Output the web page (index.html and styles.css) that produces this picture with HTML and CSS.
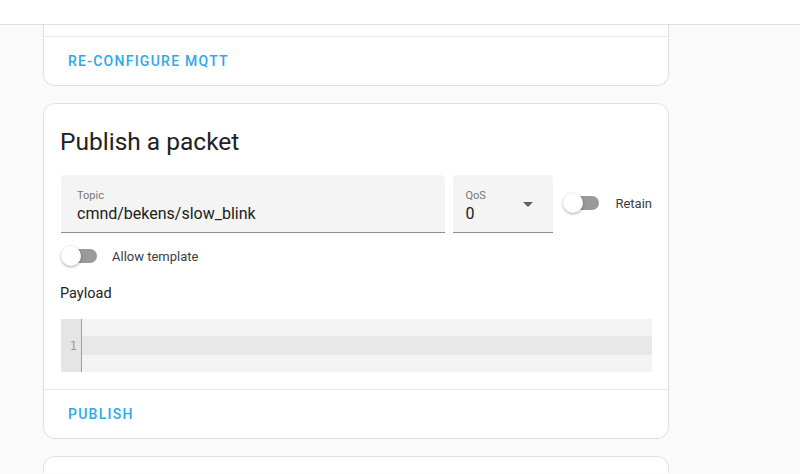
FILE: index.html
```html
<!DOCTYPE html>
<html>
<head>
<meta charset="utf-8">
<link rel="stylesheet" href="styles.css">
</head>
<body>
<div class="header"></div>
<div class="main">
  <div class="card card-clipped">
    <div class="clip-tail"></div>
    <div class="actions"><button class="btn">Re-configure MQTT</button></div>
  </div>

  <div class="card">
    <h1 class="card-header">Publish a packet</h1>
    <div class="card-content">
      <div class="row">
        <div class="field field-topic">
          <span class="field-label">Topic</span>
          <span class="field-value">cmnd/bekens/slow_blink</span>
        </div>
        <div class="field field-qos">
          <span class="field-label">QoS</span>
          <span class="field-value">0</span>
          <svg class="caret" width="10" height="5" viewBox="0 0 10 5"><path d="M0 0L5 5L10 0Z" fill="#5f5f5f"/></svg>
        </div>
        <label class="switch-row switch-retain">
          <span class="switch"><span class="track"></span><span class="thumb"></span></span>
          <span class="switch-text">Retain</span>
        </label>
      </div>
      <label class="switch-row switch-template">
        <span class="switch"><span class="track"></span><span class="thumb"></span></span>
        <span class="switch-text">Allow template</span>
      </label>
      <p class="payload-label">Payload</p>
      <div class="editor">
        <div class="gutter"><span class="lineno">1</span></div>
        <div class="code"><div class="code-line"></div></div>
      </div>
    </div>
    <div class="actions"><button class="btn">Publish</button></div>
  </div>

  <div class="card card-next"></div>
</div>
</body>
</html>
```

FILE: styles.css
```css
html, body {
  margin: 0;
  padding: 0;
  height: 100%;
  overflow: hidden;
  background: #fafafa;
  font-family: Roboto, "Noto Sans", sans-serif;
  color: #212121;
}

.header {
  height: 24px;
  background: #ffffff;
  border-bottom: 1px solid #e0e0e0;
}

.main {
  width: 626px;
  margin-left: 43px;
  display: flex;
  flex-direction: column;
  gap: 17px;
}

.card {
  background: #ffffff;
  border: 1px solid #e0e0e0;
  border-radius: 12px;
}

.card-clipped {
  border-top: none;
  border-top-left-radius: 0;
  border-top-right-radius: 0;
}

.clip-tail {
  height: 11px;
}

.actions {
  border-top: 1px solid #e8e8e8;
  height: 48px;
  padding: 0 8px;
  display: flex;
  align-items: center;
}

.btn {
  background: none;
  border: none;
  padding: 0 16px;
  height: 36px;
  font-family: Roboto, sans-serif;
  font-weight: 500;
  font-size: 14px;
  letter-spacing: 1.25px;
  text-transform: uppercase;
  color: #2fa8e6;
}

.card-header {
  margin: 0;
  padding: 22px 16px 17px;
  font-size: 24.5px;
  font-weight: 400;
  line-height: 32px;
  color: #212121;
}

.card-content {
  padding: 0 16px 17px 17px;
}

.row {
  display: flex;
  align-items: center;
  gap: 8px;
}

.field {
  position: relative;
  height: 58px;
  background: #f4f4f4;
  border-bottom: 1px solid #8e8e8e;
  border-radius: 4px 4px 0 0;
  box-sizing: border-box;
  padding: 14px 16px 0;
  display: flex;
  flex-direction: column;
}

.field-topic {
  flex: 1;
}

.field-qos {
  width: 100px;
  padding-left: 12px;
}

.field-label {
  font-size: 11px;
  line-height: 14px;
  color: #767676;
}

.field-value {
  font-size: 16px;
  line-height: 22px;
  color: #212121;
}

.caret {
  position: absolute;
  right: 20px;
  top: 27px;
}

.switch-row {
  display: flex;
  align-items: center;
  font-size: 13px;
  color: #3c3c3c;
}

.switch-retain {
  margin-left: 2px;
  margin-bottom: 2px;
}

.switch {
  position: relative;
  width: 36px;
  height: 20px;
  display: block;
}

.track {
  position: absolute;
  left: 2px;
  right: 0;
  top: 3px;
  height: 14px;
  border-radius: 7px;
  background: #9a9a9a;
}

.thumb {
  position: absolute;
  left: 0;
  top: 0;
  width: 20px;
  height: 20px;
  border-radius: 50%;
  background: #ffffff;
  box-shadow: 0 1px 3px rgba(0, 0, 0, 0.35);
}

.switch-text {
  margin-left: 16px;
}

.switch-template {
  margin-top: 13px;
}

.switch-template .switch-text {
  margin-left: 15px;
}

.payload-label {
  margin: 19px 0 0 -1px;
  font-size: 14.5px;
  line-height: 18px;
  color: #212121;
}

.editor {
  margin-top: 16px;
  height: 53px;
  display: flex;
  background: #f4f4f4;
}

.gutter {
  width: 21px;
  background: #e5e5e5;
  border-right: 1px solid #9c9c9c;
  display: flex;
  align-items: center;
  justify-content: flex-end;
  padding-right: 4px;
  box-sizing: border-box;
}

.lineno {
  font-family: "DejaVu Sans Mono", monospace;
  font-size: 12px;
  color: #9a9a9a;
}

.code {
  flex: 1;
  display: flex;
  align-items: center;
}

.code-line {
  width: 100%;
  height: 19px;
  background: #e8e8e8;
}

.card-next {
  height: 16px;
  border-bottom: none;
  border-bottom-left-radius: 0;
  border-bottom-right-radius: 0;
}
```
